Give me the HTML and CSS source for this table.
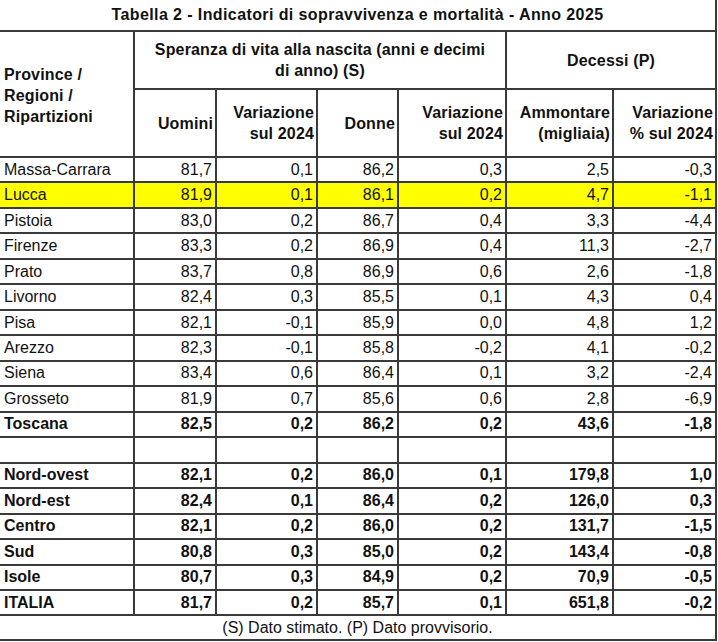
FILE: index.html
```html
<!DOCTYPE html>
<html lang="it">
<head>
<meta charset="utf-8">
<title>Tabella 2</title>
<link rel="stylesheet" href="styles.css">
</head>
<body>
<div class="sheet">
  <div class="c title">Tabella 2 - Indicatori di sopravvivenza e mortalità - Anno 2025</div>

  <div class="c hd hd-left">Province /<br>Regioni /<br>Ripartizioni</div>
  <div class="c hd hd-center span4">Speranza di vita alla nascita (anni e decimi<br>di anno) (S)</div>
  <div class="c hd hd-center span2">Decessi (P)</div>

  <div class="c hd hd-right">Uomini</div>
  <div class="c hd hd-right">Variazione<br>sul 2024</div>
  <div class="c hd hd-right">Donne</div>
  <div class="c hd hd-right">Variazione<br>sul 2024</div>
  <div class="c hd hd-right">Ammontare<br>(migliaia)</div>
  <div class="c hd hd-right">Variazione<br>% sul 2024</div>

  <div class="c name">Massa-Carrara</div><div class="c num">81,7</div><div class="c num">0,1</div><div class="c num">86,2</div><div class="c num">0,3</div><div class="c num">2,5</div><div class="c num">-0,3</div>
  <div class="c name hl">Lucca</div><div class="c num hl">81,9</div><div class="c num hl">0,1</div><div class="c num hl">86,1</div><div class="c num hl">0,2</div><div class="c num hl">4,7</div><div class="c num hl">-1,1</div>
  <div class="c name">Pistoia</div><div class="c num">83,0</div><div class="c num">0,2</div><div class="c num">86,7</div><div class="c num">0,4</div><div class="c num">3,3</div><div class="c num">-4,4</div>
  <div class="c name">Firenze</div><div class="c num">83,3</div><div class="c num">0,2</div><div class="c num">86,9</div><div class="c num">0,4</div><div class="c num">11,3</div><div class="c num">-2,7</div>
  <div class="c name">Prato</div><div class="c num">83,7</div><div class="c num">0,8</div><div class="c num">86,9</div><div class="c num">0,6</div><div class="c num">2,6</div><div class="c num">-1,8</div>
  <div class="c name">Livorno</div><div class="c num">82,4</div><div class="c num">0,3</div><div class="c num">85,5</div><div class="c num">0,1</div><div class="c num">4,3</div><div class="c num">0,4</div>
  <div class="c name">Pisa</div><div class="c num">82,1</div><div class="c num">-0,1</div><div class="c num">85,9</div><div class="c num">0,0</div><div class="c num">4,8</div><div class="c num">1,2</div>
  <div class="c name">Arezzo</div><div class="c num">82,3</div><div class="c num">-0,1</div><div class="c num">85,8</div><div class="c num">-0,2</div><div class="c num">4,1</div><div class="c num">-0,2</div>
  <div class="c name">Siena</div><div class="c num">83,4</div><div class="c num">0,6</div><div class="c num">86,4</div><div class="c num">0,1</div><div class="c num">3,2</div><div class="c num">-2,4</div>
  <div class="c name">Grosseto</div><div class="c num">81,9</div><div class="c num">0,7</div><div class="c num">85,6</div><div class="c num">0,6</div><div class="c num">2,8</div><div class="c num">-6,9</div>
  <div class="c name b">Toscana</div><div class="c num b">82,5</div><div class="c num b">0,2</div><div class="c num b">86,2</div><div class="c num b">0,2</div><div class="c num b">43,6</div><div class="c num b">-1,8</div>

  <div class="c"></div><div class="c"></div><div class="c"></div><div class="c"></div><div class="c"></div><div class="c"></div><div class="c"></div>

  <div class="c name b">Nord-ovest</div><div class="c num b">82,1</div><div class="c num b">0,2</div><div class="c num b">86,0</div><div class="c num b">0,1</div><div class="c num b">179,8</div><div class="c num b">1,0</div>
  <div class="c name b">Nord-est</div><div class="c num b">82,4</div><div class="c num b">0,1</div><div class="c num b">86,4</div><div class="c num b">0,2</div><div class="c num b">126,0</div><div class="c num b">0,3</div>
  <div class="c name b">Centro</div><div class="c num b">82,1</div><div class="c num b">0,2</div><div class="c num b">86,0</div><div class="c num b">0,2</div><div class="c num b">131,7</div><div class="c num b">-1,5</div>
  <div class="c name b">Sud</div><div class="c num b">80,8</div><div class="c num b">0,3</div><div class="c num b">85,0</div><div class="c num b">0,2</div><div class="c num b">143,4</div><div class="c num b">-0,8</div>
  <div class="c name b">Isole</div><div class="c num b">80,7</div><div class="c num b">0,3</div><div class="c num b">84,9</div><div class="c num b">0,2</div><div class="c num b">70,9</div><div class="c num b">-0,5</div>
  <div class="c name b">ITALIA</div><div class="c num b">81,7</div><div class="c num b">0,2</div><div class="c num b">85,7</div><div class="c num b">0,1</div><div class="c num b">651,8</div><div class="c num b">-0,2</div>

  <div class="c foot">(S) Dato stimato. (P) Dato provvisorio.</div>
</div>
</body>
</html>
```

FILE: styles.css
```css
html, body {
  margin: 0;
  padding: 0;
  background: #ffffff;
}

body {
  font-family: "Liberation Sans", Arial, sans-serif;
  font-size: 16px;
  color: #111111;
}

.sheet {
  display: grid;
  width: 715px;
  grid-template-columns: 133px 80px 99px 79px 106px 105px 101px;
  grid-template-rows: 30px 56px 66px repeat(18, 23.48px) 22.5px;
  column-gap: 2px;
  row-gap: 2px;
  padding: 0 2px 2px 0;
  background: #3a3a3a;
}

.c {
  background: #ffffff;
  display: flex;
  align-items: center;
  overflow: hidden;
  white-space: nowrap;
}

.title {
  grid-column: 1 / -1;
  justify-content: center;
  font-weight: bold;
  letter-spacing: 0.4px;
}

.hd {
  font-weight: bold;
  line-height: 21px;
  letter-spacing: 0.15px;
}

.hd-left {
  grid-row: span 2;
  padding-left: 4px;
  padding-top: 3px;
}

.hd-center {
  justify-content: center;
  text-align: center;
}

.span4 {
  grid-column: span 4;
}

.span2 {
  grid-column: span 2;
}

.hd-right {
  justify-content: flex-end;
  text-align: right;
  padding-right: 2px;
}

.name {
  padding-left: 4px;
}

.num {
  justify-content: flex-end;
  padding-right: 3px;
}

.b {
  font-weight: bold;
}

.hl {
  background: #ffff00;
}

.foot {
  grid-column: 1 / -1;
  justify-content: center;
}
```
